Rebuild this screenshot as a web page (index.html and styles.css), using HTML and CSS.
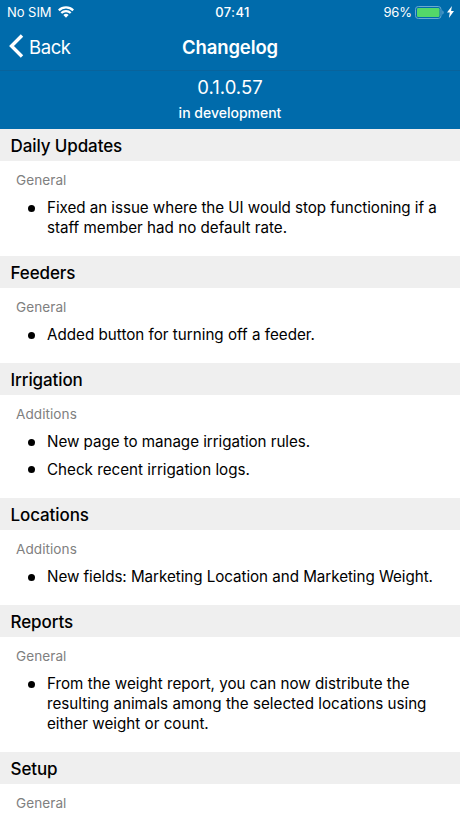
FILE: index.html
```html
<!DOCTYPE html>
<html lang="en">
<head>
<meta charset="utf-8">
<title>Changelog</title>
<link rel="stylesheet" href="styles.css">
</head>
<body>
<header class="top">
  <div class="status">
    <div class="carrier"><span class="nosim">No SIM</span>
      <svg class="wifi" width="16" height="12" viewBox="0 0 16 12"><g fill="none" stroke="#fff" stroke-width="2.2"><path d="M.8 4.4a10.2 10.2 0 0 1 14.4 0"/><path d="M3.3 7a6.7 6.7 0 0 1 9.4 0"/></g><path d="M8 11.8 5.4 9.1a3.7 3.7 0 0 1 5.2 0z" fill="#fff"/></svg>
    </div>
    <span class="time">07:41</span>
    <div class="power"><span class="percent">96%</span>
      <svg class="battery" width="29" height="13" viewBox="0 0 29 13"><rect x=".5" y=".5" width="25.5" height="12" rx="2.8" fill="none" stroke="#6aa9d0"/><rect x="2" y="2" width="22.5" height="9" rx="1.2" fill="#53d769"/><path d="M27.4 4.3c1.6.8 1.6 3.6 0 4.4z" fill="#6aa9d0"/></svg>
      <svg class="bolt" width="7" height="12" viewBox="0 0 7 12"><path d="M4.9 0 0 6.6h2.8L1.9 12 7 5H4.1z" fill="#fff"/></svg>
    </div>
  </div>
  <nav class="nav">
    <div class="back"><svg class="chevron" width="15" height="24" viewBox="0 0 15 24"><path d="M13 1.5 2.5 12 13 22.5" fill="none" stroke="#fff" stroke-width="3.4"/></svg><span class="backtext">Back</span></div>
    <h1 class="title">Changelog</h1>
  </nav>
  <div class="release"><div class="version">0.1.0.57</div><div class="stage">in development</div></div>
</header>
<main>
  <section><h2><span>Daily Updates</span></h2><h3><span>General</span></h3>
    <ul><li><span class="tight">Fixed an issue where the UI would stop functioning if a</span><br><span>staff member had no default rate.</span></li></ul></section>
  <section><h2><span>Feeders</span></h2><h3><span>General</span></h3>
    <ul><li><span>Added button for turning off a feeder.</span></li></ul></section>
  <section><h2><span>Irrigation</span></h2><h3><span>Additions</span></h3>
    <ul><li><span class="tight">New page to manage irrigation rules.</span></li><li><span>Check recent irrigation logs.</span></li></ul></section>
  <section><h2><span>Locations</span></h2><h3><span>Additions</span></h3>
    <ul><li><span class="tight">New fields: Marketing Location and Marketing Weight.</span></li></ul></section>
  <section><h2><span>Reports</span></h2><h3><span>General</span></h3>
    <ul><li><span>From the weight report, you can now distribute the</span><br><span>resulting animals among the selected locations using</span><br><span>either weight or count.</span></li></ul></section>
  <section><h2><span>Setup</span></h2><h3><span>General</span></h3></section>
</main>
</body>
</html>
```
FILE: styles.css
```css
* { box-sizing: border-box; }
body { margin: 0; height: 818px; overflow: hidden; background: #fff; color: #000; font-family: Inter, "Liberation Sans", sans-serif; }
svg { display: block; flex: none; }
.top { height: 128.6px; background: #006bab; color: #fff; }
.status, .nav { display: grid; grid-template-columns: 1fr auto 1fr; align-items: center; }
.status { height: 24px; padding: 0 6px 0 7px; font-size: 13px; }
.carrier, .power, .back { display: flex; align-items: center; }
.carrier { gap: 6px; }
.time { font-weight: 500; letter-spacing: .35px; padding-left: 4px; }
.power { justify-content: flex-end; gap: 3px; }
.percent { letter-spacing: -.1px; }
.nav { height: 46px; padding: 0 9px; }
.nosim { letter-spacing: -.05px; }
.back { gap: 5px; padding-bottom: 2px; font-size: 18.5px; letter-spacing: -.4px; }
.backtext { padding-top: 1px; }
.title { margin: 0; font-size: 18.5px; font-weight: 600; letter-spacing: -.1px; }
.release { height: 58.6px; padding-top: 4px; border-top: 1px solid #09639b; text-align: center; }
.version { font-size: 18.5px; line-height: 25px; }
.stage { font-size: 14px; line-height: 25px; font-weight: 500; }
h2 { height: 32.2px; margin: 0; padding-left: 10.5px; background: #efefef; font-size: 17px; font-weight: 500; line-height: 34px; letter-spacing: -.1px; }
h3 { margin: 0; padding: 9px 0 0 16px; color: #808080; font-size: 13.6px; font-weight: 400; line-height: 20px; letter-spacing: .05px; }
ul { list-style: none; margin: 0; padding: 8.3px 0 17.7px 47px; }
li { position: relative; font-size: 15.2px; line-height: 20px; white-space: nowrap; }
li + li { margin-top: 7.5px; }
li::before { content: ""; position: absolute; left: -19px; top: 6.5px; width: 7px; height: 7px; border-radius: 50%; background: #000; }
.tight { letter-spacing: -.05px; }
```
